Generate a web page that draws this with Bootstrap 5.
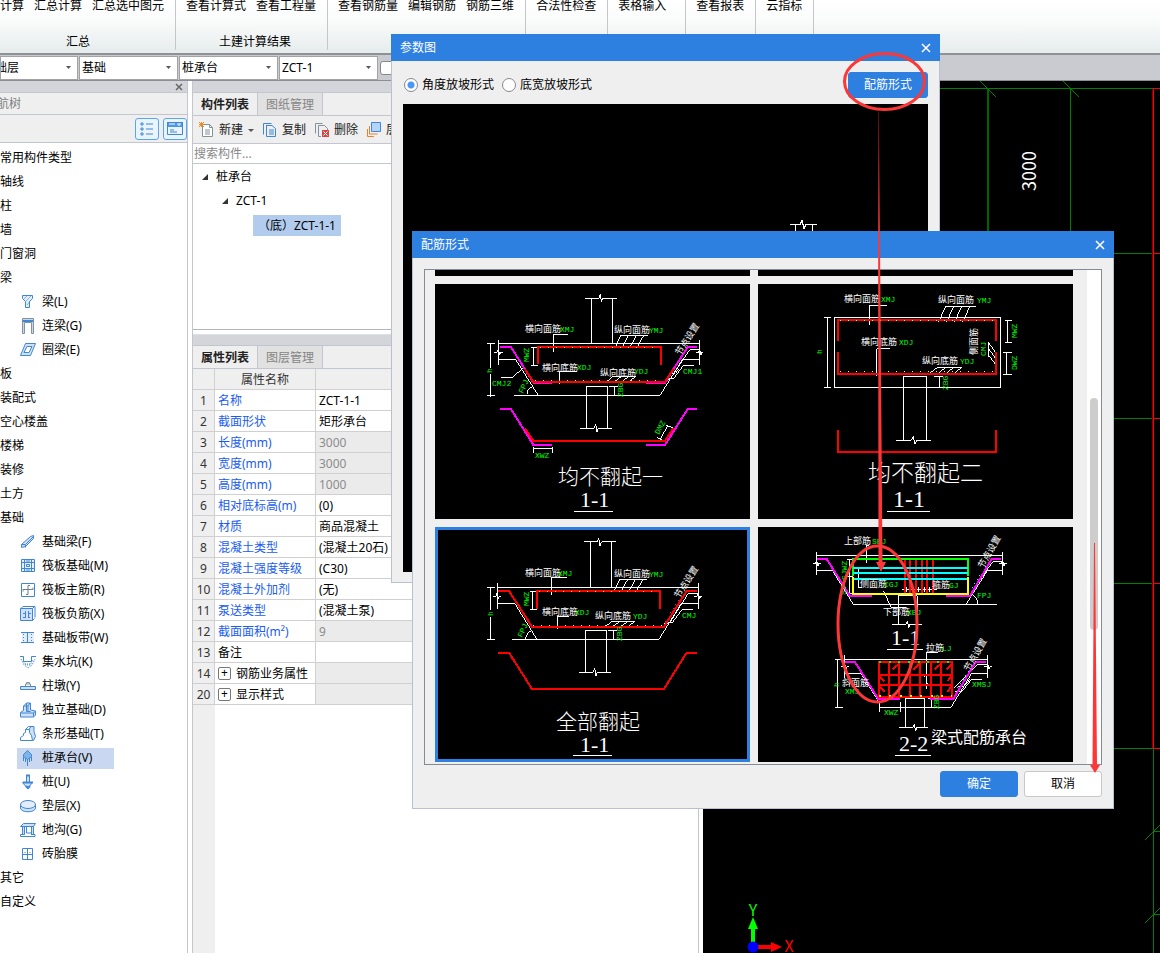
<!DOCTYPE html>
<html lang="zh-CN">
<head>
<meta charset="utf-8">
<meta name="viewport" content="width=device-width, initial-scale=1">
<title>桩承台 - 配筋形式</title>
<link href="https://cdn.jsdelivr.net/npm/bootstrap@5.3.0/dist/css/bootstrap.min.css" rel="stylesheet">
<style>
:root{--blue:#2d7fe0;--line:#c3c6cf;--face:#efefef}
body{font-family:"Noto Sans","Noto Sans CJK SC",sans-serif;font-size:12px;line-height:18px;color:#000;background:#fff}
.ribbon{height:55px;background:linear-gradient(#fff,#fafbfb 40%,#e6ecec);border-bottom:2px solid #8e9296}
.ribbon-group{height:50px;border-right:1px solid #c4c7c9;padding:0 11px 0 10px;gap:10px;line-height:16px}
.ribbon-group>.d-flex{gap:10px}
.ribbon button,.tools button{border:0;background:none;padding:0;color:inherit;line-height:12px;white-space:nowrap}
.combos{height:26px;background:#c9cbd0;border-bottom:1px solid #8b8f95}
.combos .form-select{width:99px;height:24px;margin-right:1px;padding:0 20px 0 2px;font-size:12px;line-height:18px;color:#000;border:1px solid #a3a3a3;border-radius:0;background-color:#fff;background-size:5px 3px;background-position:right 6px center;background-image:url("data:image/svg+xml,%3csvg xmlns='http://www.w3.org/2000/svg' viewBox='0 0 5 3'%3e%3cpath d='M0 0h5L2.500 3z' fill='%23555'/%3e%3c/svg%3e")}
.combos .form-select.first{width:78px;padding-left:0;text-indent:-6px}
.combos .form-check-input{width:14px;height:14px;margin:0 0 0 1px;border:1px solid #888;border-radius:3px}
.nav-pane{width:188px;border-right:1px solid var(--line)}
.mid-pane{width:507px;margin-left:4px;border:1px solid var(--line);border-width:0 1px}
.strip{height:12px;background:#d4d5db;border-bottom:1px solid var(--line);flex:none}
.pane-title{height:22px;background:var(--face);color:#808080;border-bottom:1px solid var(--line);text-indent:-3px}
.tools{height:28px;background:var(--face);border-bottom:1px solid var(--line);color:#222}
.view-btn{width:24px;height:22px;border:1px solid #58a6f2!important;border-radius:3px;background:#e9f4fe!important}
.tree{list-style:none;margin:0;padding:3px 0 0;white-space:nowrap}
.tree ul{list-style:none;margin:0;padding:0 0 0 17px}
.tree .node{display:flex;align-items:center;height:24px}
.tree .leaf{display:inline-flex;align-items:center;height:21px;padding:0 3px;gap:6px}
.tree .leaf.picked{background:#c9d8f0;padding-right:22px}
.tree .leaf svg,.tools svg{width:16px;height:16px;flex:none;fill:none;stroke:#3f86d6}
.tools .caret{width:6px;margin-left:1px}
.pane-tabs{height:23px;background:var(--face);border-bottom:1px solid var(--line)}
.pane-tabs button{width:65px;border:0;border-right:1px solid var(--line);background:#e1e1e1;color:#858585;padding:2px 0 0}
.pane-tabs button.on{background:var(--face);color:#222;font-weight:700}
.mid-tools{padding-left:6px}
.search{height:20px;border:0;border-bottom:1px solid var(--line);border-radius:0;padding:0 1px;font-size:12px;line-height:18px}
.search::placeholder{color:#888}
.tree.parts{height:166px;border-bottom:1px solid #b4b6bc;padding-top:1px}
.lvl-1{padding-left:9px}.lvl-2{padding-left:29px}.lvl-3{padding-left:60px}
.twist{width:0;height:0;border-left:6px solid transparent;border-bottom:6px solid #333}
.sel-part{background:#b2ccee;height:21px;padding:0 5px;line-height:21px}
.props{flex:1;background:linear-gradient(90deg,var(--face) 22px,#fff 22px)}
.prop-grid{width:100%;table-layout:fixed;border-collapse:separate;border-spacing:0}
.prop-grid th,.prop-grid td{height:21px;padding:1px 3px 0;line-height:19px;border:1px solid #d0d0d0;border-width:0 1px 1px 0;white-space:nowrap;font-weight:400}
.prop-grid thead th,.prop-grid tbody th{background:var(--face);text-align:center;color:#333;padding:1px 0 0}
.prop-grid td:nth-child(2){color:#1a5cf0}
.prop-grid tr.plain td:nth-child(2){color:#000}
.prop-grid tr.off td:nth-child(3){background:#ebebeb;color:#8b8b8b}
.plus{width:13px;height:13px;border:1px solid #777;border-radius:2px;background:#fff;line-height:10px;padding:0;margin-right:5px;font-size:12px;vertical-align:1px}
.cad{background:#000;margin-left:4px}
.cad svg,.preview svg,.shape svg{display:block}
.win{background:var(--face);border:1px solid #b9c0d4;border-top:0}
.win-title{height:27px;background:var(--blue);color:#fff;margin:0 -1px;padding:0 9px}
.win-title button{border:0;background:none;padding:0;width:10px;height:16px;display:flex;align-items:center}
.win-param{left:391px;top:34px;width:549px;height:549px}
.win-rebar{left:412px;top:231px;width:702px}
.options{height:43px;padding:4px 11px 0 12px}
.win-param .form-check-input{width:14px;height:14px;margin:0;border:1px solid #888}
.win-param .form-check-input:checked{background:#fff radial-gradient(#4a98f5 3px,#fff 4px)}
.act{width:78px;height:26px;padding:0;font-size:12px;border-radius:3px}
.act-wide{width:80px}
.act-blue{background:var(--blue);color:#fff;border-color:var(--blue)}
.act-plain{background:#fff;color:#000;border-color:#c8c8c8}
.preview{background:#000;margin:0 11px 10px}
.list-box{margin:11px 11px 6px;height:496px;border:1px solid #858a94}
.shapes{display:grid;grid-template-columns:315px 315px;gap:8px;padding:0 0 0 10px}
.shape{background:#000;height:235px;padding:0;border:0}
.shape.peek{height:6px}
.shape.chosen{outline:3px solid var(--blue);outline-offset:-3px}
.scroll-track{width:14px;background:#fff;padding:128px 3px 0}
.scroll-thumb{height:232px;border-radius:4px;background:#cdcdcd}
.foot{gap:6px;padding:0 11px 11px}
.ln{fill:none;stroke:#fff;stroke-width:3;shape-rendering:crispEdges}
.thick{stroke-width:6}
.rd{stroke:#f00}.mg{stroke:#f0f}.gr{stroke:#0f0}.cy{stroke:#0ff}.yl{stroke:#ff0}
.dots{stroke:#ff0;stroke-dasharray:3 21}
.cn{font:9px "Noto Sans CJK SC",sans-serif;fill:#fff}
.en{font:8px "Liberation Mono",monospace;fill:#0f0}
.cap{font:300 21px "Noto Sans CJK SC",sans-serif;fill:#fff}
.cap-l{font-size:23px}
.cap-s{font:16px "Noto Sans CJK SC",sans-serif;fill:#fff}
.sec{font:22px "Liberation Serif",serif;fill:#fff}
.sec-l{font-size:24px}
.marks{pointer-events:none;z-index:5}
</style>
</head>
<body>
<div class="vh-100 d-flex flex-column overflow-hidden position-relative">

<header class="ribbon d-flex flex-shrink-0">
  <div class="ribbon-group ps-0 d-flex flex-column justify-content-between">
    <div class="d-flex"><button>计算</button><button>汇总计算</button><button>汇总选中图元</button></div>
    <div class="text-center me-2">汇总</div>
  </div>
  <div class="ribbon-group d-flex flex-column justify-content-between">
    <div class="d-flex"><button>查看计算式</button><button>查看工程量</button></div>
    <div class="text-center ps-2">土建计算结果</div>
  </div>
  <div class="ribbon-group d-flex align-items-start"><button>查看钢筋量</button><button>编辑钢筋</button><button>钢筋三维</button></div>
  <div class="ribbon-group d-flex align-items-start"><button>合法性检查</button></div>
  <div class="ribbon-group d-flex align-items-start"><button class="me-2">表格输入</button></div>
  <div class="ribbon-group d-flex align-items-start"><button>查看报表</button></div>
  <div class="ribbon-group d-flex align-items-start"><button>云指标</button></div>
</header>

<div class="combos d-flex align-items-center flex-shrink-0">
  <select class="form-select first" aria-label="楼层"><option>础层</option></select>
  <select class="form-select" aria-label="类别"><option>基础</option></select>
  <select class="form-select" aria-label="构件类型"><option>桩承台</option></select>
  <select class="form-select" aria-label="构件"><option>ZCT-1</option></select>
  <input class="form-check-input" type="checkbox" aria-label="锁定">
</div>

<main class="d-flex flex-grow-1 overflow-hidden">
  <nav class="nav-pane flex-shrink-0">
    <div class="strip d-flex align-items-center justify-content-end pe-1">
      <svg width="8" height="8" viewBox="0 0 8 8"><path d="M1 1l6 6M7 1L1 7" stroke="#666" stroke-width="1.500"/></svg>
    </div>
    <div class="pane-title d-flex align-items-center">航树</div>
    <div class="tools d-flex align-items-center justify-content-end gap-1 pe-0">
      <button class="view-btn" aria-label="列表"><svg viewBox="0 0 16 16"><path d="M2 2h2v2H2zM2 7h2v2H2zM2 12h2v2H2zM7 3h7M7 8h7M7 13h7"/></svg></button>
      <button class="view-btn" aria-label="窗口"><svg viewBox="0 0 16 16"><path fill="#4a98f0" stroke="none" d="M0 1h16v5H0z"/><path d="M.5 1.500h15v12H.5zM3 9h4M3 11h7"/><path stroke="#fff" d="M3 2v2M5 2v2M7 2v2M10 3h4M12 3v2"/></svg></button>
    </div>
    <ul class="tree">
      <li class="node">常用构件类型</li><li class="node">轴线</li><li class="node">柱</li><li class="node">墙</li><li class="node">门窗洞</li>
      <li><div class="node">梁</div><ul>
        <li class="node"><span class="leaf"><svg viewBox="0 0 16 16"><path fill="#e6eefb" d="M2.500 1.500h10v3l-3 3v6h-4v-6l-3-3z"/><path stroke-width=".6" d="M4 5l4-4M6 7l6-6M7 11l3-4"/></svg>梁(L)</span></li>
        <li class="node"><span class="leaf"><svg viewBox="0 0 16 16"><path stroke="#82929e" fill="#ccd8e2" d="M2.500.5h11v15h-2v-11h-7v11h-2z"/><path stroke-width="2" d="M3 3h10"/></svg>连梁(G)</span></li>
        <li class="node"><span class="leaf"><svg viewBox="0 0 16 16"><path fill="#cfe0f8" fill-rule="evenodd" d="M5.500 1.500h10l-5 12H.5zM7 4.500l-3 6h5l3-6z"/></svg>圈梁(E)</span></li>
      </ul></li>
      <li class="node">板</li><li class="node">装配式</li><li class="node">空心楼盖</li><li class="node">楼梯</li><li class="node">装修</li><li class="node">土方</li>
      <li><div class="node">基础</div><ul>
        <li class="node"><span class="leaf"><svg viewBox="0 0 16 16"><path fill="#cfe0f8" d="M1.500 10.500l9-8 3-1v3l-8 8-4 1zM1.500 10.500h4v3M6 10l7-7"/></svg>基础梁(F)</span></li>
        <li class="node"><span class="leaf"><svg viewBox="0 0 16 16"><path fill="#e6eefb" d="M1.500 1.500h13v12h-13z"/><path d="M4.500 1v13M11.500 1v13M1 4.500h14M1 10.500h14M6.500 6.500h3v2h-3zM7 2v2M9 2v2M7 11v2M9 11v2"/></svg>筏板基础(M)</span></li>
        <li class="node"><span class="leaf"><svg viewBox="0 0 16 16"><path d="M1.500 1.500h13v13h-13z"/><path stroke="#6d7f8c" d="M3 9.500v-2h10v-2M10 3.500H8v9H6"/></svg>筏板主筋(R)</span></li>
        <li class="node"><span class="leaf"><svg viewBox="0 0 16 16"><path fill="#cfe0f8" d="M.5 2.500h12v12H.5z"/><path d="M3 .5h12v11M1 2.500l2-2M12.500 2.500l2-2M12.500 14.500l2-2M5.500 5v6M8.500 5v6M3 7.500h2M3 11.500h3M8 7.500h3M8 11.500h2"/></svg>筏板负筋(X)</span></li>
        <li class="node"><span class="leaf"><svg viewBox="0 0 16 16"><path fill="#e2ecfa" stroke="none" d="M2 3h12v10H2z"/><path d="M1 2.500h13M1 12.500h13M7.500 3v10"/><path stroke-dasharray="1 2" d="M3.500 4v8M11.500 4v8"/></svg>基础板带(W)</span></li>
        <li class="node"><span class="leaf"><svg viewBox="0 0 16 16"><path d="M0 2.500h3.500v5h8v-5H16"/><path stroke-dasharray="1 1" d="M1 5l3 6 4 3 4-3 3-6M3 7l3 4h4l3-5M5 10h6"/></svg>集水坑(K)</span></li>
        <li class="node"><span class="leaf"><svg viewBox="0 0 16 16"><path fill="#cfe0f8" d="M.5 8.500h15v3H.5z"/><path stroke="#82929e" d="M5.500 8V6h5v2M6.500 6V4.500h3V6"/></svg>柱墩(Y)</span></li>
        <li class="node"><span class="leaf"><svg viewBox="0 0 16 16"><path fill="#cfe0f8" d="M.5 10.500l3-2V4l3-3h4v7l5 1v4l-2 2H.5z"/><path d="M6.500 1v8.500h4M4 4h4l2-3M8 4v5M.5 11h13v4M13.500 11l2-2"/></svg>独立基础(D)</span></li>
        <li class="node"><span class="leaf"><svg viewBox="0 0 16 16"><path fill="#cfe0f8" d="M9 3.500L11 .5h3v5l1.500 5-2 4L9 13z"/><path fill="#fff" d="M.5 14.500v-3l3-2v-2l2-1v-3h4v3l2 3 1 5z"/><path d="M5.500 3.500l3-3h5"/></svg>条形基础(T)</span></li>
        <li class="node"><span class="leaf picked"><svg viewBox="0 0 16 16"><path fill="#7db4ea" d="M7.500.5l4 4v2l-4 3-4-3v-2z"/><path d="M3.500 7v4M5.500 8v4M7.500 9v7M9.500 8v4M11.500 7v4"/></svg>桩承台(V)</span></li>
        <li class="node"><span class="leaf"><svg viewBox="0 0 16 16"><path fill="#cfe0f8" d="M6.500 1.500h3v7h3l-5 6-5-6h4z"/><path stroke-width="2" d="M6 1.500h4M3 8.500h10M6 12l2 2 2-2"/></svg>桩(U)</span></li>
        <li class="node"><span class="leaf"><svg viewBox="0 0 16 16"><path fill="#cfe0f8" d="M.5 6v4c0 5 15 5 15 0V6"/><ellipse cx="8" cy="6.500" rx="7.500" ry="4" fill="#e4eefb"/></svg>垫层(X)</span></li>
        <li class="node"><span class="leaf"><svg viewBox="0 0 16 16"><path fill="#cfe0f8" d="M.5 4.500l3-3h12l-2 3zM2.500 4.500h2v8h-2zM11.500 4.500h2v8h-2z"/><path d="M.5 14.500v-2h4M11 12.500h4v2H.5M6.500 5v6h5"/></svg>地沟(G)</span></li>
        <li class="node"><span class="leaf"><svg viewBox="0 0 16 16"><path d="M2.500 2.500h10v11h-10zM7.500 3v10M3 8.500h10"/><path stroke-dasharray="1 1" d="M5 6v3M10 6v3"/></svg>砖胎膜</span></li>
      </ul></li>
      <li class="node">其它</li><li class="node">自定义</li>
    </ul>
  </nav>

  <section class="mid-pane flex-shrink-0 d-flex flex-column">
    <div class="strip"></div>
    <div class="pane-tabs d-flex"><button class="on">构件列表</button><button>图纸管理</button></div>
    <div class="tools mid-tools d-flex align-items-center">
      <button class="d-flex align-items-center gap-1"><svg viewBox="0 0 16 16"><path stroke="#82929e" fill="#fff" d="M3.500 2.500h7l3 3v9h-10z"/><path stroke="#82929e" d="M10.500 2.500v3h3M6 8h5M6 10h5M6 12h5"/><path stroke="#f08a24" d="M0 2.500h5M2.500 0v5M0 0l5 5M5 0L0 5"/></svg>新建<svg class="caret" viewBox="0 0 6 16"><path d="M0 7h6l-3 3z" fill="#555" stroke="none"/></svg></button>
      <button class="d-flex align-items-center gap-1 ms-2"><svg viewBox="0 0 16 16"><path d="M1.500 12.500v-11h8M4 3.500h6l3.500 3v8h-9v-11zM7 8h5M7 10h5M7 12h5"/></svg>复制</button>
      <button class="d-flex align-items-center gap-1 ms-2"><svg viewBox="0 0 16 16"><path stroke="#82929e" d="M1.500 11.500v-10h7M7 14.500H4.500v-11h6l3 3V8"/><path fill="#d64545" stroke="none" d="M8 8h7v7H8z"/><path stroke="#fff" d="M9.500 9.500l4 4M13.500 9.500l-4 4"/></svg>删除</button>
      <button class="d-flex align-items-center gap-1 ms-2"><svg viewBox="0 0 16 16"><path fill="#b5d4fb" d="M5.500.5h9v9h-9z"/><path stroke="#e8812c" d="M3.500 4v8h8M1.500 7v7.500H8"/></svg>层间复制</button>
    </div>
    <input class="form-control search" type="text" placeholder="搜索构件..." aria-label="搜索构件">
    <ul class="tree parts">
      <li class="node gap-2 lvl-1"><i class="twist"></i>桩承台</li>
      <li class="node gap-2 lvl-2"><i class="twist"></i>ZCT-1</li>
      <li class="node lvl-3"><span class="sel-part">（底）ZCT-1-1</span></li>
    </ul>
    <div class="strip mt-1 border-top"></div>
    <div class="pane-tabs d-flex"><button class="on">属性列表</button><button>图层管理</button></div>
    <div class="props">
      <table class="prop-grid">
        <colgroup><col style="width:22px"><col style="width:101px"><col></colgroup>
        <thead><tr><th></th><th>属性名称</th><th></th></tr></thead>
        <tbody>
        <tr><th>1</th><td>名称</td><td>ZCT-1-1</td></tr>
        <tr><th>2</th><td>截面形状</td><td>矩形承台</td></tr>
        <tr class="off"><th>3</th><td>长度(mm)</td><td>3000</td></tr>
        <tr class="off"><th>4</th><td>宽度(mm)</td><td>3000</td></tr>
        <tr class="off"><th>5</th><td>高度(mm)</td><td>1000</td></tr>
        <tr><th>6</th><td>相对底标高(m)</td><td>(0)</td></tr>
        <tr><th>7</th><td>材质</td><td>商品混凝土</td></tr>
        <tr><th>8</th><td>混凝土类型</td><td>(混凝土20石)</td></tr>
        <tr><th>9</th><td>混凝土强度等级</td><td>(C30)</td></tr>
        <tr><th>10</th><td>混凝土外加剂</td><td>(无)</td></tr>
        <tr><th>11</th><td>泵送类型</td><td>(混凝土泵)</td></tr>
        <tr class="off"><th>12</th><td>截面面积(m²)</td><td>9</td></tr>
        <tr class="plain"><th>13</th><td>备注</td><td></td></tr>
        <tr class="plain off"><th>14</th><td><button class="plus">+</button>钢筋业务属性</td><td></td></tr>
        <tr class="plain off"><th>20</th><td><button class="plus">+</button>显示样式</td><td></td></tr>
        </tbody>
      </table>
    </div>
  </section>

  <section class="cad flex-grow-1">
    <svg width="100%" height="100%">
      <g transform="translate(-703 -81)" fill="none" stroke="#008000">
        <path shape-rendering="crispEdges" d="M703 88.500h450M1070.500 88v300M703 253.500h450M703 418.500h450M703 583.500h450M703 748.500h450M1153.500 749v500M1153 831.500h900M1153 914.500h900"/>
        <path stroke="#006400" stroke-width="2" shape-rendering="crispEdges" d="M988 88v300"/>
        <path d="M980 81l16 16M1063 81l16 16M1145 840l16-16M1145 923l16-16"/>
        <path stroke="#f00" shape-rendering="crispEdges" d="M1153.500 88v661M1153 88.500h900M1153 253.500h900M1153 418.500h900M1153 583.500h900M1153 748.500h900"/>
        <path stroke="#700" shape-rendering="crispEdges" d="M1152.500 90v658"/>
        <path stroke="#0f0" stroke-width="4" d="M753 943V928"/><path fill="#0f0" stroke="none" d="M753 917l5 12h-10z"/>
        <path stroke="#f00" stroke-width="4" d="M758 947h14"/><path fill="#f00" stroke="none" d="M782 947l-11-5v10z"/>
        <circle cx="753" cy="947" r="5.500" fill="#00f" stroke="none"/>
        <g stroke="none" font-family="Noto Sans CJK SC, sans-serif" text-anchor="middle">
          <text x="1036" y="171" transform="rotate(-90 1036 171)" font-size="18" fill="#fff">3000</text>
          <text x="753" y="916" font-size="16" fill="#0f0">Y</text><text x="789" y="952" font-size="16" fill="#f00">X</text>
        </g>
      </g>
    </svg>
  </section>
</main>

<section class="win win-param position-absolute d-flex flex-column" role="dialog" aria-label="参数图">
  <div class="win-title d-flex align-items-center justify-content-between"><span>参数图</span><button aria-label="关闭"><svg width="10" height="10" viewBox="0 0 10 10"><path d="M1 1l8 8M9 1L1 9" stroke="#fff" stroke-width="1.600"/></svg></button></div>
  <div class="options d-flex align-items-center">
    <input class="form-check-input" type="radio" name="slope" id="s1" checked><label for="s1" class="ms-1">角度放坡形式</label>
    <input class="form-check-input ms-2" type="radio" name="slope" id="s2"><label for="s2" class="ms-1">底宽放坡形式</label>
    <button class="btn act act-wide act-blue ms-auto">配筋形式</button>
  </div>
  <div class="preview flex-grow-1"><svg width="100%" height="140"><path class="ln" style="stroke-width:1" d="M387 120.500h10l2-4 2 8 2-4h11M392.500 121v19M409.500 121v19"/></svg></div>
</section>

<section class="win win-rebar position-absolute" role="dialog" aria-label="配筋形式">
  <div class="win-title d-flex align-items-center justify-content-between"><span>配筋形式</span><button aria-label="关闭"><svg width="10" height="10" viewBox="0 0 10 10"><path d="M1 1l8 8M9 1L1 9" stroke="#fff" stroke-width="1.600"/></svg></button></div>
  <div class="list-box d-flex justify-content-between overflow-hidden">
    <div class="shapes align-content-start">
      <div class="shape peek"></div><div class="shape peek"></div>

      <button class="shape" aria-label="均不翻起一"><svg width="315" height="235">
        <g class="ln" transform="translate(-10 -19) scale(.333333)">
          <path d="M480 100H522l4-12 3 22 4-10H576M500 100V235M563 100V235M220 236H824M220 225V300M824 225V300M208 262h9l3-9 4 16 3-7h8M812 262h9l3-9 4 16 3-7h4M187 236H210M187 391H210M196 236V310M196 327V395M220 284H272L340 391M268 391H705L772 284H824M720 343h15L794 254H824M806 301H775L745 342H722M735 325h16l12-14M485 490V364H548V490M465 490H508l4-12 4 22 4-10H561M553 364H580M569 364V391M318 247H338M318 301H338M325 247V301M429 208H385V262M455 320H403V357M668 211H587L570 250M610 211L590 250M634 211L613 250M656 211L635 250M632 334H565L545 350M590 334L568 350M613 334L590 350M632 334L612 350M307 388Q305 370 325 365M228 337H262L300 305M325 545V563M383 545V563M325 552H383M697 518L718 528M724 480L745 490M728 482L705 524M447 739H564"/>
          <path class="thick mg" d="M225 246H258L325 353H381M663 353H720L788 246H816M225 432H258L325 540H381M663 540H720L788 432H816"/>
          <path class="thick rd" d="M339 298V247H708V300M300 312L325 351H720L745 312M300 490L325 528H720L745 490"/>
          <path class="dots" d="M345 247H705M330 346H715"/>
        </g>
        <text class="cn" x="90" y="48">横向面筋</text><text class="en" x="125" y="48">XMJ</text><text class="cn" x="179" y="49">纵向面筋</text><text class="en" x="214" y="49">YMJ</text>
        <text class="cn" x="107" y="87">横向底筋</text><text class="en" x="142" y="86">XDJ</text><text class="cn" x="165" y="92">纵向底筋</text><text class="en" x="199" y="90">YDJ</text>
        <text class="en" x="57" y="102">CMJ2</text><text class="en" x="248" y="90">CMJ1</text><text class="en" x="100" y="174">XWZ</text>
        <text class="en" transform="translate(57 89) rotate(-90)">h</text><text class="en" transform="translate(94 78) rotate(-90)">MWZ</text><text class="en" transform="translate(188 113) rotate(-90)">ZBG</text><text class="en" transform="translate(88 110) rotate(-65)">FPJ</text><text class="en" transform="translate(224 151) rotate(-62)">DMZ</text><text class="cn" transform="translate(245 72) rotate(-57)">节点设置</text>
        <text class="cap" x="123" y="200">均不翻起一</text><text class="sec" x="145" y="223">1-1</text>
      </svg></button>

      <button class="shape" aria-label="均不翻起二"><svg width="315" height="235">
        <g class="ln" transform="translate(-8 -19) scale(.333333)">
          <path d="M253 157H752V367H253zM222 157H243M222 367H243M232 157V367M411 122H358V180M420 251H380V333M678 124H587L566 170M611 124L590 170M635 124L614 170M660 124L638 170M635 308H562L541 323M587 308L566 323M611 308L590 323M635 308L614 323M460 526V334H530V526M438 526H484l6-12 5 24 5-12H543M553 334H578M568 334V367M765 166H787M765 233H787M773 166V233M760 262H787M760 328H787M770 262V328M715 232V275M715 232L738 264M715 250L738 282M715 270L738 300M411 739H540"/>
          <path class="thick rd" d="M264 228V164H738V228M264 261V327H738V261M264 495V561H738V495"/>
          <path class="dots" d="M270 166H738M270 319H738"/>
        </g>
        <text class="cn" x="86" y="18">横向面筋</text><text class="en" x="123" y="18">XMJ</text><text class="cn" x="180" y="19">纵向面筋</text><text class="en" x="219" y="19">YMJ</text>
        <text class="cn" x="103" y="61">横向底筋</text><text class="en" x="141" y="61">XDJ</text><text class="cn" x="164" y="80">纵向底筋</text><text class="en" x="202" y="80">YDJ</text>
        <text class="en" transform="translate(64 70) rotate(-90)">h</text><text class="cn" transform="translate(219 71) rotate(-90)">侧面筋</text><text class="en" transform="translate(228 72) rotate(-90)">CMJ</text><text class="en" transform="translate(259 54) rotate(-90)">MWZ</text><text class="en" transform="translate(259 86) rotate(-90)">DWZ</text><text class="en" transform="translate(190 106) rotate(-90)">ZBG</text>
        <text class="cap cap-l" x="110" y="197">均不翻起二</text><text class="sec sec-l" x="135" y="223">1-1</text>
      </svg></button>

      <button class="shape chosen" aria-label="全部翻起"><svg width="315" height="235">
        <g class="ln" transform="translate(-10 -7) scale(.333333)">
          <path d="M477 65H517l4-12 4 24 5-12H573M497 65V202M560 65V202M217 203H821M217 190V266M821 190V266M204 229h9l3-9 4 16 3-7h5M808 229h9l3-9 4 16 3-7h5M187 203H210M187 358H210M196 203V270M196 292V360M217 250H269L336 358M261 358H702L769 250H821M718 310h15L790 220H821M803 268H772L742 308H720M481 457V331H544V457M462 457H505l4-12 4 24 4-12H558M549 331H577M566 331V358M315 214H336M315 268H336M322 214V268M426 172H379V224M432 289H397V326M665 178H584L566 217M608 178L587 217M631 178L610 217M654 178L632 217M629 304H561L541 320M584 304L565 320M608 304L588 320M629 304L610 320M302 358Q303 338 322 331M444 706H561"/>
          <path class="thick rd" d="M219 213H252L321 320H717L785 213H816M336 266V213H705V266M219 398H252L321 507H717L785 398H816"/>
          <path class="dots" d="M342 214H702M325 317H712"/>
          <path class="mg" stroke-dasharray="3 12" d="M720 305L768 230"/>
        </g>
        <text class="cn" x="90" y="49">横向面筋</text><text class="en" x="123" y="49">XMJ</text><text class="cn" x="179" y="50">纵向面筋</text><text class="en" x="214" y="50">YMJ</text>
        <text class="cn" x="107" y="88">横向底筋</text><text class="en" x="140" y="88">XDJ</text><text class="cn" x="160" y="92">纵向底筋</text><text class="en" x="198" y="92">YDJ</text><text class="en" x="247" y="91">CMJ</text>
        <text class="en" transform="translate(58 89) rotate(-90)">h</text><text class="en" transform="translate(94 79) rotate(-90)">MWZ</text><text class="en" transform="translate(187 114) rotate(-90)">ZBG</text><text class="en" transform="translate(87 111) rotate(-65)">FPJ</text><text class="cn" transform="translate(244 72) rotate(-57)">节点设置</text>
        <text class="cap" x="121" y="202">全部翻起</text><text class="sec" x="145" y="225">1-1</text>
      </svg></button>

      <button class="shape" aria-label="梁式配筋承台"><svg width="315" height="235">
        <g class="ln" transform="translate(-8 -7) scale(.333333)">
          <path d="M200 106H758M200 95V166M758 95V166M190 130h7l3-8 4 16 3-8h5M748 130h7l3-8 4 16 3-8h5M200 151H247L310 253H741M648 253L713 151H758M655 232L728 125H757M357 76H350V130M325 140V202H335M292 118H308M300 118V222M292 222H308M292 170H308M400 213L424 262H467M457 208H560M470 201v14M487 201v14M505 201v14M523 201v14M540 201v14M445 313V227H502V313M426 313H468l4-10 4 20 4-10H516M664 222Q685 235 683 253M411 388H519M283 419H713M283 405V475M713 405V475M274 440h7l3-8 4 16 3-8h5M703 440h7l3-8 4 16 3-8h5M255 419H278M255 562H278M263 419V562M283 460H333L386 545M388 562H603L665 460H713M612 505L683 433H712M697 478H665L635 515H615M625 500h15l20-22M564 397H530V508M523 470l12-9M523 497l12-9M345 490L360 498M388 547V575M452 547V575M388 562H452M466 622V535H524V622M448 622H489l4-10 4 22 4-12H533M535 535H570M544 535V562M435 706H543"/>
          <path class="thick mg" d="M200 117H230L300 228H365M588 228H660L725 117H753M284 426H315L385 537H450M540 537H610L677 426H708"/>
          <path class="thick gr" d="M309 168V117H655V168"/><path class="thick rd" d="M464 120V220M481 120V220M498 120V220M516 120V220M531 120V220M549 120V220"/>
          <path class="thick cy" d="M309 144H655M309 159H655M309 177H655"/><path class="thick yl" d="M309 172V222H655V172"/>
          <path class="thick rd" d="M387 427H607V531H387zM418 427V531M448 427V531M480 427V531M511 427V531M544 427V531M572 427V531M387 466H607M387 495H607M428 448l18-16M490 448l18-16M554 448l18-16M590 448l16-16M390 470l14 14M390 500l14 16M604 470l-12 14M604 500l-12 16"/>
          <path stroke="#0f0" stroke-width="6" stroke-dasharray="6 23" d="M387 427H607"/><path class="yl" stroke-width="6" stroke-dasharray="6 25" d="M387 527H607"/>
          <path class="cy" stroke-dasharray="3 12" d="M665 205L712 130M622 505L665 440"/>
        </g>
        <text class="cn" x="86" y="17">上部筋</text><text class="en" x="114" y="17">SBJ</text><text class="cn" x="102" y="60">侧面筋</text><text class="en" x="126" y="60">CGJ</text><text class="cn" x="174" y="61">箍筋</text><text class="en" x="191" y="61">GJ</text><text class="en" x="219" y="71">FPJ</text>
        <text class="cn" x="125" y="88">下部筋</text><text class="en" x="149" y="88">XBJ</text><text class="cn" x="168" y="124">拉筋</text><text class="en" x="184" y="124">LJ</text><text class="cn" x="84" y="159">斜面筋</text><text class="en" x="87" y="167">XMJ</text><text class="en" x="214" y="160">XMSJ</text><text class="en" x="126" y="188">XWZ</text>
        <text class="en" transform="translate(88 68) rotate(-90)">SJ</text><text class="en" transform="translate(89 53) rotate(-90)">SJWZ</text><text class="en" transform="translate(81 160) rotate(-90)">h</text><text class="en" transform="translate(181 182) rotate(-90)">ZBG</text><text class="cn" transform="translate(225 42) rotate(-60)">节点设置</text><text class="cn" transform="translate(211 145) rotate(-60)">节点设置</text>
        <text class="sec" x="133" y="118">1-1</text><text class="sec" x="141" y="224">2-2</text><text class="cap-s" x="173" y="216">梁式配筋承台</text>
      </svg></button>
    </div>
    <div class="scroll-track"><div class="scroll-thumb"></div></div>
  </div>
  <div class="foot d-flex justify-content-end"><button class="btn act act-blue">确定</button><button class="btn act act-plain">取消</button></div>
</section>

<svg class="marks position-absolute top-0 start-0 w-100 h-100">
  <defs><linearGradient id="fade" x1="0" y1="0" x2="0" y2="1"><stop offset="0" stop-color="#fd3737" stop-opacity=".3"/><stop offset=".3" stop-color="#fd3737"/></linearGradient></defs>
  <g fill="none" stroke="#fd3737" stroke-width="3"><ellipse cx="884.500" cy="81.500" rx="40" ry="28"/><ellipse cx="877.500" cy="624" rx="39.500" ry="78"/></g>
  <path fill="url(#fade)" d="M878 112h1l3.500 450h3.500l-5 10-5-10h2.500z"/>
  <path fill="#fd3737" d="M1094 543h1l2 222h3l-5 8-5-8h2.500z"/>
</svg>
</div>
<script src="https://cdn.jsdelivr.net/npm/bootstrap@5.3.0/dist/js/bootstrap.bundle.min.js"></script>
</body>
</html>
